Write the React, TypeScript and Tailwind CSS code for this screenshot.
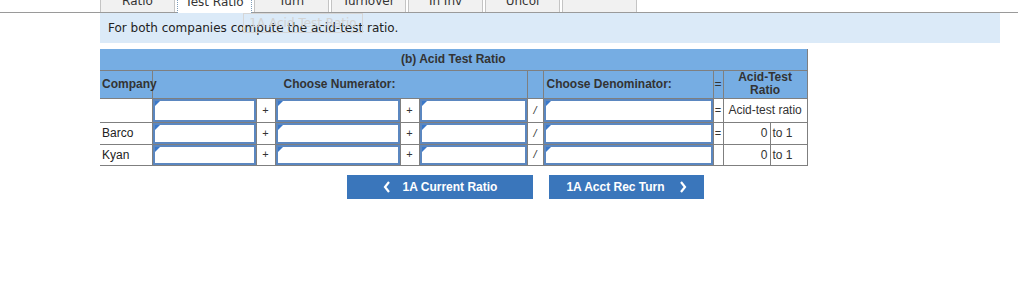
const tabs = ["Ratio", "Test Ratio", "Turn", "Turnover", "In Inv", "Uncol", ""];

const InputCell = () => (
  <td className="relative border border-[#7f7f7f] p-0 bg-white">
    <div className="absolute inset-0 border-2 border-[#5b87c0] bg-white">
      <span className="absolute left-0 top-0 h-0 w-0 border-t-[5px] border-r-[5px] border-t-[#3a78c9] border-r-transparent" />
    </div>
  </td>
);

const OpCell = ({ sym, italic }: { sym: string; italic?: boolean }) => (
  <td className={"border border-[#7f7f7f] text-center text-[11px] text-[#333] bg-white " + (italic ? "italic" : "")}>{sym}</td>
);

const App = () => {
  return (
    <div className="w-[1018px] h-[306px] bg-white overflow-hidden relative">
      {/* tab strip */}
      <div className="flex gap-[2px] pl-[100px] -mt-[11px] h-[24px] border-b border-[#9a9a9a] font-['DejaVu_Sans',sans-serif] text-[12px] text-[#333]">
        {tabs.map((t, i) => (
          <div
            key={i}
            className={
              "w-[75px] flex items-center justify-center border border-b-0 " +
              (i === 1
                ? "bg-white border-[#7f9db9] border-dotted -mb-px"
                : "bg-[#f1f1f1] border-[#c4c4c4]")
            }
          >
            {t}
          </div>
        ))}
      </div>

      <div className="ml-[100px] w-[900px] h-[30px] bg-[#dbeaf8] flex items-center pl-[8px] font-['DejaVu_Sans',sans-serif] text-[12px] text-[#222]">
        For both companies compute the acid-test ratio.
      </div>

      {/* faded tooltip */}
      <div className="absolute left-[243px] top-[13px] w-[120px] h-[20px] border border-[#d6d6d6] flex items-center justify-center font-['DejaVu_Sans',sans-serif] text-[12px] text-[#d3d3d3]">
        1A Acid Test Ratio
      </div>

      <table className="ml-[100px] mt-[6px] table-fixed border-collapse w-[707px] font-['Liberation_Sans',Arial,sans-serif] text-[12px] text-[#222]">
        <colgroup>
          <col className="w-[52px]" />
          <col className="w-[104px]" />
          <col className="w-[19px]" />
          <col className="w-[125px]" />
          <col className="w-[19px]" />
          <col className="w-[108px]" />
          <col className="w-[16px]" />
          <col className="w-[170px]" />
          <col className="w-[10px]" />
          <col className="w-[47px]" />
          <col className="w-[37px]" />
        </colgroup>
        <thead>
          <tr className="h-[21px] bg-[#76ade3]">
            <th colSpan={11} className="border border-l-0 border-t-0 border-[#7f7f7f] font-bold text-[#333] text-center">
              (b) Acid Test Ratio
            </th>
          </tr>
          <tr className="h-[28px] bg-[#76ade3] text-[#333]">
            <th className="border border-l-0 border-[#7f7f7f] text-left font-bold pl-[2px] whitespace-nowrap overflow-visible">Company</th>
            <th colSpan={5} className="border border-[#7f7f7f] font-bold text-center">Choose Numerator:</th>
            <th className="border border-[#7f7f7f]" />
            <th className="border border-[#7f7f7f] text-left font-bold pl-[3px]">Choose Denominator:</th>
            <th className="border border-[#7f7f7f] font-normal text-center">=</th>
            <th colSpan={2} className="border border-[#7f7f7f] font-bold text-center leading-[13px]">
              Acid-Test
              <br />
              Ratio
            </th>
          </tr>
        </thead>
        <tbody>
          <tr className="h-[24px]">
            <td className="border border-l-0 border-[#7f7f7f]" />
            <InputCell />
            <OpCell sym="+" />
            <InputCell />
            <OpCell sym="+" />
            <InputCell />
            <OpCell sym="/" italic />
            <InputCell />
            <OpCell sym="=" />
            <td colSpan={2} className="border border-[#7f7f7f] text-center text-[#333]">Acid-test ratio</td>
          </tr>
          {["Barco", "Kyan"].map((c, i) => (
            <tr key={c} className={i === 0 ? "h-[22px]" : "h-[21px]"}>
              <td className="border border-l-0 border-[#7f7f7f] pl-[2px] text-[#222]">{c}</td>
              <InputCell />
              <OpCell sym="+" />
              <InputCell />
              <OpCell sym="+" />
              <InputCell />
              <OpCell sym="/" italic />
              <InputCell />
              <OpCell sym={i === 0 ? "=" : ""} />
              <td className="border border-[#7f7f7f] text-right pr-[2px] text-[#333]">0</td>
              <td className="border border-[#7f7f7f] pl-[2px] text-[#333]">to 1</td>
            </tr>
          ))}
        </tbody>
      </table>

      <div className="flex gap-[16px] ml-[347px] mt-[9px] font-['Liberation_Sans',Arial,sans-serif] text-[12px] font-bold text-white">
        <button className="w-[186px] h-[24px] bg-[#3a76bb] flex items-center justify-center gap-[12px]">
          <svg width="8" height="12" viewBox="0 0 8 12">
            <polyline points="6,1 2,6 6,11" fill="none" stroke="white" strokeWidth="2.2" />
          </svg>
          <span>1A Current Ratio</span>
        </button>
        <button className="w-[155px] h-[24px] bg-[#3a76bb] flex items-center justify-center gap-[14px]">
          <span>1A Acct Rec Turn</span>
          <svg width="8" height="12" viewBox="0 0 8 12">
            <polyline points="2,1 6,6 2,11" fill="none" stroke="white" strokeWidth="2.2" />
          </svg>
        </button>
      </div>
    </div>
  );
};

export default App;
